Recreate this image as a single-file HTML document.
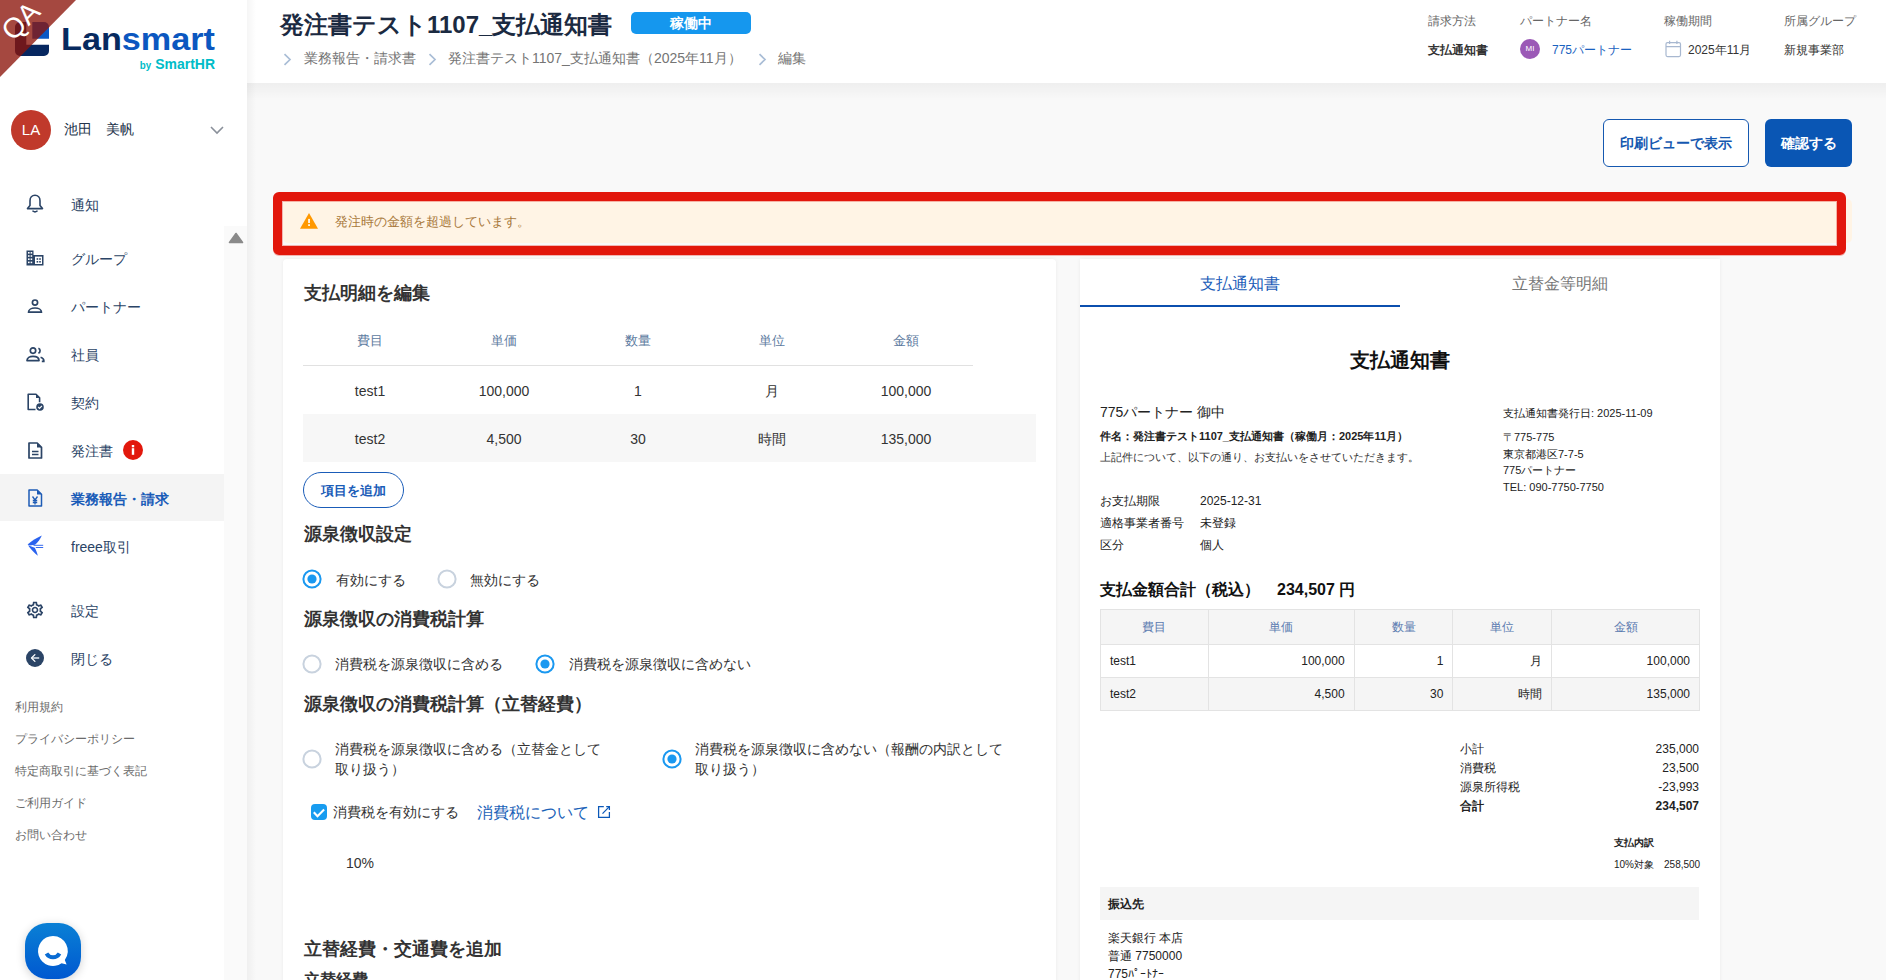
<!DOCTYPE html>
<html lang="ja"><head><meta charset="utf-8"><title>Lansmart</title>
<style>
*{box-sizing:border-box}
html,body{margin:0;padding:0;width:1886px;height:980px;overflow:hidden;background:#f9f9f9;font-family:"Liberation Sans",sans-serif;color:#333}
.a{position:absolute;white-space:nowrap;line-height:1}
svg{position:absolute;overflow:visible}
#side{position:absolute;left:0;top:0;width:247px;height:980px;background:#fff}
.nav{position:absolute;left:71px;font-size:14px;color:#2b4466;line-height:1;white-space:nowrap}
.foot{position:absolute;left:15px;font-size:12px;color:#6b6b6b;line-height:1;white-space:nowrap}
#hdr{position:absolute;left:247px;top:0;width:1700px;height:83px;background:#fff}
.hl{font-size:12px;color:#666}
.hv{font-size:12px;color:#333}
.card{position:absolute;background:#fff;border-radius:6px;box-shadow:0 0 4px rgba(0,0,0,.06)}
.sec{font-size:18px;font-weight:bold;color:#333}
.th{font-size:13px;color:#5c7aa0;text-align:center;width:134px}
.td{font-size:14px;color:#333;text-align:center;width:134px}
.radio{position:absolute;width:19px;height:19px;border-radius:50%;border:2px solid #c9d3df;background:#fff}
.radio.on{border-color:#1a96f0}
.radio.on:after{content:"";position:absolute;left:3.5px;top:3.5px;width:8px;height:8px;border-radius:50%;background:#1a96f0}
.rt{font-size:14px;color:#333}
.p11{font-size:11px;color:#222}
.p12{font-size:12px;color:#222}
table.pv{position:absolute;left:1100px;top:609px;width:600px;border-collapse:collapse;font-size:12px;color:#222}
table.pv td,table.pv th{border:1px solid #e3e3e3;padding:0 9px;line-height:1}
table.pv th{background:#f5f5f5;color:#5b7bb0;font-weight:normal;height:35px;text-align:center}
table.pv td{height:33px;text-align:right}
table.pv td:first-child{text-align:left}
table.pv tr.g td{background:#f5f5f5}
</style></head><body>

<!-- SIDEBAR -->
<div id="side">
  <!-- logo -->
  <svg style="left:15px;top:22px" width="34" height="34" viewBox="0 0 34 34">
    <path d="M0 5a5 5 0 0 1 5-5H11.3V22.8H34V29a5 5 0 0 1-5 5H5a5 5 0 0 1-5-5Z" fill="#062760"/>
    <path d="M17.3 0H29a5 5 0 0 1 5 5V16.8H17.3Z" fill="#0b58c4"/>
  </svg>
  <svg style="left:61px;top:20px" width="160" height="56" viewBox="0 0 160 56">
    <text x="0" y="30" font-family="Liberation Sans" font-weight="bold" font-size="30.5" textLength="154" lengthAdjust="spacingAndGlyphs"><tspan fill="#072a5f">Lan</tspan><tspan fill="#0b57c0">smart</tspan></text>
    <text x="78.8" y="49" font-family="Liberation Sans" font-weight="bold" font-size="11.5" fill="#00bcc8" textLength="11.4" lengthAdjust="spacingAndGlyphs">by</text><text x="94.2" y="49" font-family="Liberation Sans" font-weight="bold" font-size="14.5" fill="#00bcc8" textLength="59.8" lengthAdjust="spacingAndGlyphs">SmartHR</text>
  </svg>
  <!-- user -->
  <div class="a" style="left:11px;top:110px;width:40px;height:40px;border-radius:50%;background:#c0392b;color:#fff;font-size:15px;line-height:40px;text-align:center">LA</div>
  <div class="a" style="left:64px;top:122px;font-size:14px;color:#23344b">池田　美帆</div>
  <svg style="left:210px;top:126px" width="14" height="8" viewBox="0 0 14 8"><path d="M1 1l6 6 6-6" fill="none" stroke="#8a909a" stroke-width="1.6"/></svg>

  <!-- highlight row -->
  <div class="a" style="left:0;top:474px;width:224px;height:47px;background:#f4f4f4"></div>
  <!-- scrollbar -->
  <div class="a" style="left:224px;top:226px;width:23px;height:754px;background:#fafafa"></div>
  <svg style="left:228px;top:232px" width="16" height="12" viewBox="0 0 16 12"><path d="M8 1.5L14.5 10.5H1.5Z" fill="#8a8a8a" stroke="#8a8a8a" stroke-width="1.6" stroke-linejoin="round"/></svg>

  <!-- nav icons -->
  <svg style="left:26px;top:194px" width="18" height="20" viewBox="0 0 18 20"><path d="M9 1.3c-3 0-5 2.4-5 5.4v4.8L1.5 14.6h15L14 11.5V6.7c0-3-2-5.4-5-5.4z" fill="none" stroke="#2b4466" stroke-width="1.6" stroke-linejoin="round"/><path d="M7 17.2q2 1.3 4 0" fill="none" stroke="#2b4466" stroke-width="1.6" stroke-linecap="round"/></svg>
  <svg style="left:26px;top:250px" width="18" height="16" viewBox="0 0 18 16"><path d="M0.5 0.5h7v15h-7zM7.5 5h10v10.5h-10z" fill="#2b4466"/><g fill="#fff"><rect x="2" y="2" width="1.6" height="1.6"/><rect x="4.6" y="2" width="1.6" height="1.6"/><rect x="2" y="5.2" width="1.6" height="1.6"/><rect x="4.6" y="5.2" width="1.6" height="1.6"/><rect x="2" y="8.4" width="1.6" height="1.6"/><rect x="4.6" y="8.4" width="1.6" height="1.6"/><rect x="2" y="11.6" width="1.6" height="1.6"/><rect x="4.6" y="11.6" width="1.6" height="1.6"/><rect x="9" y="6.6" width="7" height="7.4"/></g><g fill="#2b4466"><rect x="10.6" y="8.2" width="1.6" height="1.6"/><rect x="13.2" y="8.2" width="1.6" height="1.6"/><rect x="10.6" y="11" width="1.6" height="1.6"/><rect x="13.2" y="11" width="1.6" height="1.6"/></g></svg>
  <svg style="left:27px;top:297px" width="16" height="17" viewBox="0 0 16 17"><circle cx="8" cy="5.6" r="2.6" fill="none" stroke="#2b4466" stroke-width="1.7"/><path d="M1.5 15.2c0-2.6 3-4.2 6.5-4.2s6.5 1.6 6.5 4.2z" fill="none" stroke="#2b4466" stroke-width="1.7" stroke-linejoin="round"/></svg>
  <svg style="left:26px;top:346px" width="20" height="17" viewBox="0 0 20 17"><circle cx="7" cy="4.6" r="2.7" fill="none" stroke="#2b4466" stroke-width="1.7"/><path d="M12.4 2.2a2.7 2.7 0 0 1 0 5" fill="none" stroke="#2b4466" stroke-width="1.7"/><path d="M1 14.6c0-2.7 2.7-4.2 6-4.2s6 1.5 6 4.2z" fill="none" stroke="#2b4466" stroke-width="1.7" stroke-linejoin="round"/><path d="M14.6 11.2c1.8.6 3.2 1.7 3.2 3.4v0.8h-2" fill="none" stroke="#2b4466" stroke-width="1.7"/></svg>
  <svg style="left:27px;top:393px" width="18" height="19" viewBox="0 0 18 19"><path d="M8.5 16.5H1.2V1.2h7.8l3.6 3.6v4.5" fill="none" stroke="#2b4466" stroke-width="1.6" stroke-linejoin="round"/><path d="M9 1.2v3.8h3.6z" fill="#2b4466"/><circle cx="13" cy="14" r="3.8" fill="#2b4466"/><path d="M11.2 14l1.3 1.3 2.4-2.4" fill="none" stroke="#fff" stroke-width="1.2"/></svg>
  <svg style="left:28px;top:442px" width="15" height="17" viewBox="0 0 15 17"><path d="M1 1h8.2l4.3 4.3V16H1z" fill="none" stroke="#2b4466" stroke-width="1.7" stroke-linejoin="round"/><path d="M9 1v4.5h4.5z" fill="#2b4466"/><path d="M4 9.5h6.5M4 12.5h6.5" stroke="#2b4466" stroke-width="1.6"/></svg>
  <svg style="left:28px;top:489px" width="15" height="18" viewBox="0 0 15 18"><path d="M1 1h8.2l4.3 4.3V17H1z" fill="none" stroke="#1d5bb5" stroke-width="1.5" stroke-linejoin="round"/><path d="M9 1v4.5h4.5z" fill="#1d5bb5"/><path d="M4.5 7.5l2.5 3.5 2.5-3.5M7 11v4.5M4.8 11.5h4.4M4.8 13.5h4.4" fill="none" stroke="#1d5bb5" stroke-width="1.3"/></svg>
  <svg style="left:27px;top:535px" width="17" height="22" viewBox="0 0 17 22"><path d="M0.6 9.4C4.5 6.2 9.5 3 14.8 0.6C13.4 4 11 7.2 8 9.8L2.6 10.5Z" fill="#2a62ee"/><path d="M6.5 10.3H16.2M8.8 12.5H16.2" stroke="#2a62ee" stroke-width="0.95"/><path d="M1 10.2L7.8 12.8C9.2 15.2 10.2 18.2 10.8 20.8C7.2 17.8 4 14.2 1 10.2Z" fill="#2a62ee"/></svg>
  <svg style="left:25px;top:600px" width="20" height="20" viewBox="0 0 24 24"><path d="M19.43 12.98c.04-.32.07-.64.07-.98 0-.34-.03-.66-.07-.98l2.11-1.65c.19-.15.24-.42.12-.64l-2-3.46a.5.5 0 0 0-.61-.22l-2.49 1c-.52-.4-1.08-.73-1.69-.98l-.38-2.65A.49.49 0 0 0 14 2h-4c-.25 0-.46.18-.49.42l-.38 2.65c-.61.25-1.17.59-1.69.98l-2.49-1a.57.57 0 0 0-.18-.03c-.17 0-.34.09-.43.25l-2 3.46c-.13.22-.07.49.12.64l2.11 1.65c-.04.32-.07.65-.07.98s.03.66.07.98l-2.11 1.65c-.19.15-.24.42-.12.64l2 3.46a.5.5 0 0 0 .61.22l2.49-1c.52.4 1.08.73 1.69.98l.38 2.65c.03.24.24.42.49.42h4c.25 0 .46-.18.49-.42l.38-2.65c.61-.25 1.17-.59 1.69-.98l2.49 1c.06.02.12.03.18.03.17 0 .34-.09.43-.25l2-3.46c.12-.22.07-.49-.12-.64l-2.11-1.65zm-1.98-1.71c.04.31.05.52.05.73 0 .21-.02.43-.05.73l-.14 1.13.89.7 1.08.84-.7 1.21-1.27-.51-1.04-.42-.9.68c-.43.32-.84.56-1.25.73l-1.06.43-.16 1.13-.2 1.35h-1.4l-.19-1.35-.16-1.13-1.06-.43c-.43-.18-.83-.41-1.23-.71l-.91-.7-1.06.43-1.27.51-.7-1.21 1.08-.84.89-.7-.14-1.13c-.03-.31-.05-.54-.05-.74s.02-.43.05-.73l.14-1.13-.89-.7-1.08-.84.7-1.21 1.27.51 1.04.42.9-.68c.43-.32.84-.56 1.25-.73l1.06-.43.16-1.13.2-1.35h1.39l.19 1.35.16 1.13 1.06.43c.43.18.83.41 1.23.71l.91.7 1.06-.43 1.27-.51.7 1.21-1.07.85-.89.7.14 1.13zM12 8c-2.21 0-4 1.79-4 4s1.79 4 4 4 4-1.79 4-4-1.79-4-4-4zm0 6c-1.1 0-2-.9-2-2s.9-2 2-2 2 .9 2 2-.9 2-2 2z" fill="#2b4466"/></svg>
  <svg style="left:26px;top:649px" width="18" height="18" viewBox="0 0 18 18"><circle cx="9" cy="9" r="9" fill="#2b4466"/><path d="M13.2 9H6.4" fill="none" stroke="#c9d2de" stroke-width="1.7"/><path d="M8.9 5.6L5.5 9l3.4 3.4" fill="none" stroke="#fff" stroke-width="1.3" stroke-linecap="round" stroke-linejoin="round"/></svg>

  <div class="nav" style="top:198px">通知</div>
  <div class="nav" style="top:252px">グループ</div>
  <div class="nav" style="top:300px">パートナー</div>
  <div class="nav" style="top:348px">社員</div>
  <div class="nav" style="top:396px">契約</div>
  <div class="nav" style="top:444px">発注書</div>
  <div class="a" style="left:123px;top:440px;width:20px;height:20px;border-radius:50%;background:#e2180c"></div>
  <svg style="left:123px;top:440px" width="20" height="20" viewBox="0 0 20 20"><rect x="8.8" y="8.2" width="2.4" height="6.6" fill="#fff"/><rect x="8.8" y="5" width="2.4" height="2.3" fill="#fff"/></svg>
  <div class="nav" style="top:492px;color:#1a5cb8;font-weight:bold">業務報告・請求</div>
  <div class="nav" style="top:540px">freee取引</div>
  <div class="nav" style="top:604px">設定</div>
  <div class="nav" style="top:652px">閉じる</div>

  <div class="foot" style="top:701px">利用規約</div>
  <div class="foot" style="top:733px">プライバシーポリシー</div>
  <div class="foot" style="top:765px">特定商取引に基づく表記</div>
  <div class="foot" style="top:797px">ご利用ガイド</div>
  <div class="foot" style="top:829px">お問い合わせ</div>

  <!-- chat button -->
  <div class="a" style="left:25px;top:923px;width:56px;height:56px;border-radius:22px;background:linear-gradient(#0a80d5,#0058d0);box-shadow:0 2px 10px rgba(0,0,0,.18)"></div>
  <svg style="left:25px;top:923px" width="56" height="56" viewBox="0 0 56 56"><path d="M28 13a15 15 0 1 0 8.6 27.3l5 1.2-1.8-4.6A15 15 0 0 0 28 13z" fill="#fff"/><path d="M21.5 30.5a7.5 7.5 0 0 0 13 0" fill="none" stroke="#0a6cd3" stroke-width="4"/></svg>
</div>


<!-- HEADER -->
<div id="hdr"></div>
<div class="a" style="left:247px;top:83px;width:1639px;height:18px;background:linear-gradient(rgba(0,0,0,.045),rgba(0,0,0,0))"></div>
<div class="a" style="left:247px;top:0;width:9px;height:980px;background:linear-gradient(to right,rgba(0,0,0,.04),rgba(0,0,0,0))"></div>
<div class="a" style="left:280px;top:13px;font-size:24px;font-weight:bold;color:#1b2a41">発注書テスト1107_支払通知書</div>
<div class="a" style="left:631px;top:12px;width:120px;height:22px;border-radius:5px;background:#1597ee;color:#fff;font-size:14px;font-weight:bold;text-align:center;line-height:22px">稼働中</div>
<svg style="left:283px;top:53px" width="9" height="13" viewBox="0 0 9 13"><path d="M1.5 1.2l5.5 5.3-5.5 5.3" fill="none" stroke="#a9bdd6" stroke-width="1.7"/></svg>
<div class="a" style="left:304px;top:51px;font-size:14px;color:#757575">業務報告・請求書</div>
<svg style="left:428px;top:53px" width="9" height="13" viewBox="0 0 9 13"><path d="M1.5 1.2l5.5 5.3-5.5 5.3" fill="none" stroke="#a9bdd6" stroke-width="1.7"/></svg>
<div class="a" style="left:448px;top:51px;font-size:14px;color:#757575">発注書テスト1107_支払通知書（2025年11月）</div>
<svg style="left:758px;top:53px" width="9" height="13" viewBox="0 0 9 13"><path d="M1.5 1.2l5.5 5.3-5.5 5.3" fill="none" stroke="#a9bdd6" stroke-width="1.7"/></svg>
<div class="a" style="left:778px;top:51px;font-size:14px;color:#757575">編集</div>

<div class="a hl" style="left:1428px;top:15px">請求方法</div>
<div class="a hv" style="left:1428px;top:44px;font-weight:bold">支払通知書</div>
<div class="a hl" style="left:1520px;top:15px">パートナー名</div>
<div class="a" style="left:1520px;top:39px;width:20px;height:20px;border-radius:50%;background:#9b59b6;color:#fff;font-size:8px;line-height:20px;text-align:center">MI</div>
<div class="a hv" style="left:1552px;top:44px;color:#1a62c0">775パートナー</div>
<div class="a hl" style="left:1664px;top:15px">稼働期間</div>
<svg style="left:1665px;top:40px" width="17" height="18" viewBox="0 0 17 18"><rect x="1" y="2.6" width="14.5" height="14" rx="1.5" fill="none" stroke="#a8b8d0" stroke-width="1.2"/><path d="M1 6.6h14.5M4.6 0.8v3.2M11.9 0.8v3.2" stroke="#a8b8d0" stroke-width="1.2"/></svg>
<div class="a hv" style="left:1688px;top:44px">2025年11月</div>
<div class="a hl" style="left:1784px;top:15px">所属グループ</div>
<div class="a hv" style="left:1784px;top:44px">新規事業部</div>

<!-- BUTTONS -->
<div class="a" style="left:1603px;top:119px;width:146px;height:48px;border:1px solid #1558b0;border-radius:6px;background:#fff;color:#1558b0;font-size:14px;font-weight:bold;text-align:center;line-height:46px">印刷ビューで表示</div>
<div class="a" style="left:1765px;top:119px;width:87px;height:48px;border-radius:6px;background:#0a56b4;color:#fff;font-size:14px;font-weight:bold;text-align:center;line-height:48px">確認する</div>

<!-- ALERT -->
<div class="a" style="left:283px;top:199px;width:1569px;height:44px;border-radius:5px;background:#fff4e5"></div>
<svg style="left:299px;top:212px" width="20" height="18" viewBox="0 0 20 18"><path d="M10 1L19 16.8H1z" fill="#ff9800"/><rect x="9.1" y="6.9" width="1.9" height="4.1" fill="#fff4e5"/><rect x="9.1" y="12.2" width="1.9" height="1.8" fill="#fff4e5"/></svg>
<div class="a" style="left:335px;top:215px;font-size:13px;color:#a8783a">発注時の金額を超過しています。</div>
<div class="a" style="left:273px;top:192px;width:1573px;height:63px;border:9px solid #e2170c;border-radius:6px;box-shadow:0 1px 0 0 rgba(226,23,12,.3),inset 0 0 0 1px rgba(226,23,12,.3)"></div>


<!-- LEFT CARD -->
<div class="card" style="left:283px;top:259px;width:773px;height:760px;border-radius:4px"></div>
<div class="a sec" style="left:304px;top:284px">支払明細を編集</div>
<div class="a th" style="left:303px;top:334px">費目</div>
<div class="a th" style="left:437px;top:334px">単価</div>
<div class="a th" style="left:571px;top:334px">数量</div>
<div class="a th" style="left:705px;top:334px">単位</div>
<div class="a th" style="left:839px;top:334px">金額</div>
<div class="a" style="left:303px;top:365px;width:670px;height:1px;background:#e1e1e1"></div>
<div class="a td" style="left:303px;top:384px">test1</div>
<div class="a td" style="left:437px;top:384px">100,000</div>
<div class="a td" style="left:571px;top:384px">1</div>
<div class="a td" style="left:705px;top:384px">月</div>
<div class="a td" style="left:839px;top:384px">100,000</div>
<div class="a" style="left:303px;top:414px;width:733px;height:48px;background:#f7f7f7"></div>
<div class="a td" style="left:303px;top:432px">test2</div>
<div class="a td" style="left:437px;top:432px">4,500</div>
<div class="a td" style="left:571px;top:432px">30</div>
<div class="a td" style="left:705px;top:432px">時間</div>
<div class="a td" style="left:839px;top:432px">135,000</div>
<div class="a" style="left:303px;top:472px;width:101px;height:36px;border:1px solid #1a5cb8;border-radius:18px;color:#1a5cb8;font-size:13px;font-weight:bold;text-align:center;line-height:36px">項目を追加</div>

<div class="a sec" style="left:304px;top:525px">源泉徴収設定</div>
<svg style="left:302.0px;top:569.0px" width="20" height="20" viewBox="0 0 20 20"><circle cx="10" cy="10" r="8.6" fill="#fff" stroke="#1a98f0" stroke-width="2"/><circle cx="10" cy="10" r="4.6" fill="#1a98f0"/></svg>
<div class="a rt" style="left:336px;top:573px">有効にする</div>
<svg style="left:437.2px;top:569.0px" width="20" height="20" viewBox="0 0 20 20"><circle cx="10" cy="10" r="8.6" fill="#fff" stroke="#c8d2de" stroke-width="2"/></svg>
<div class="a rt" style="left:470px;top:573px">無効にする</div>

<div class="a sec" style="left:304px;top:610px">源泉徴収の消費税計算</div>
<svg style="left:302.0px;top:653.6px" width="20" height="20" viewBox="0 0 20 20"><circle cx="10" cy="10" r="8.6" fill="#fff" stroke="#c8d2de" stroke-width="2"/></svg>
<div class="a rt" style="left:335px;top:657px">消費税を源泉徴収に含める</div>
<svg style="left:534.5px;top:653.6px" width="20" height="20" viewBox="0 0 20 20"><circle cx="10" cy="10" r="8.6" fill="#fff" stroke="#1a98f0" stroke-width="2"/><circle cx="10" cy="10" r="4.6" fill="#1a98f0"/></svg>
<div class="a rt" style="left:569px;top:657px">消費税を源泉徴収に含めない</div>

<div class="a sec" style="left:304px;top:695px">源泉徴収の消費税計算（立替経費）</div>
<svg style="left:302.1px;top:749.0px" width="20" height="20" viewBox="0 0 20 20"><circle cx="10" cy="10" r="8.6" fill="#fff" stroke="#c8d2de" stroke-width="2"/></svg>
<div class="a rt" style="left:335px;top:739px;line-height:20px">消費税を源泉徴収に含める（立替金として<br>取り扱う）</div>
<svg style="left:661.9px;top:749.0px" width="20" height="20" viewBox="0 0 20 20"><circle cx="10" cy="10" r="8.6" fill="#fff" stroke="#1a98f0" stroke-width="2"/><circle cx="10" cy="10" r="4.6" fill="#1a98f0"/></svg>
<div class="a rt" style="left:695px;top:739px;line-height:20px">消費税を源泉徴収に含めない（報酬の内訳として<br>取り扱う）</div>

<div class="a" style="left:311px;top:804px;width:16px;height:16px;border-radius:4px;background:#189cf0"></div>
<svg style="left:311px;top:804px" width="16" height="16" viewBox="0 0 16 16"><path d="M2.8 8.3l3.7 3.9 6.6-6.6" fill="none" stroke="#fff" stroke-width="2.1"/></svg>
<div class="a rt" style="left:333px;top:805px">消費税を有効にする</div>
<div class="a" style="left:477px;top:805px;font-size:16px;color:#1a62b8">消費税について</div>
<svg style="left:597px;top:805px" width="15" height="15" viewBox="0 0 15 15"><path d="M6.8 1.5H1.6v10.9h10.8V7" fill="none" stroke="#0b58b8" stroke-width="1.25"/><path d="M9.2 1.5h3.2v3.4" fill="none" stroke="#0b58b8" stroke-width="1.25"/><path d="M5.5 8.6L12.1 1.9" fill="none" stroke="#0b58b8" stroke-width="1.25"/></svg>
<div class="a rt" style="left:346px;top:856px">10%</div>

<div class="a sec" style="left:304px;top:940px">立替経費・交通費を追加</div>
<div class="a" style="left:304px;top:972px;font-size:16px;font-weight:bold;color:#333">立替経費</div>

<!-- RIGHT CARD -->
<div class="card" style="left:1080px;top:259px;width:640px;height:760px;border-radius:0"></div>
<div class="a" style="left:1200px;top:276px;font-size:16px;color:#1a5cb8">支払通知書</div>
<div class="a" style="left:1512px;top:276px;font-size:16px;color:#777">立替金等明細</div>
<div class="a" style="left:1080px;top:305px;width:320px;height:2px;background:#0b4fae"></div>

<div class="a" style="left:1350px;top:350px;font-size:20px;font-weight:bold;color:#111">支払通知書</div>
<div class="a" style="left:1100px;top:405px;font-size:14px;color:#222">775パートナー 御中</div>
<div class="a p11" style="left:1100px;top:431px;font-weight:bold">件名：発注書テスト1107_支払通知書（稼働月：2025年11月）</div>
<div class="a p11" style="left:1100px;top:452px;color:#333">上記件について、以下の通り、お支払いをさせていただきます。</div>

<div class="a p11" style="left:1503px;top:408px">支払通知書発行日: 2025-11-09</div>
<div class="a p11" style="left:1503px;top:429px;line-height:16.5px">〒775-775<br>東京都港区7-7-5<br>775パートナー<br>TEL: 090-7750-7750</div>

<div class="a p12" style="left:1100px;top:490px;line-height:22px">お支払期限<br>適格事業者番号<br>区分</div>
<div class="a p12" style="left:1200px;top:490px;line-height:22px">2025-12-31<br>未登録<br>個人</div>

<div class="a" style="left:1100px;top:582px;font-size:16px;font-weight:bold;color:#111">支払金額合計（税込）</div>
<div class="a" style="left:1277px;top:582px;font-size:16px;font-weight:bold;color:#111">234,507 円</div>

<table class="pv">
<tr><th style="width:108px">費目</th><th style="width:146px">単価</th><th style="width:99px">数量</th><th style="width:99px">単位</th><th style="width:148px">金額</th></tr>
<tr><td>test1</td><td>100,000</td><td>1</td><td>月</td><td>100,000</td></tr>
<tr class="g"><td>test2</td><td>4,500</td><td>30</td><td>時間</td><td>135,000</td></tr>
</table>

<div class="a p12" style="left:1460px;top:740px;line-height:19px">小計<br>消費税<br>源泉所得税<br><b>合計</b></div>
<div class="a p12" style="left:1560px;top:740px;width:139px;text-align:right;line-height:19px">235,000<br>23,500<br>-23,993<br><b>234,507</b></div>
<div class="a" style="left:1614px;top:838px;font-size:10px;font-weight:bold;color:#222">支払内訳</div>
<div class="a" style="left:1614px;top:860px;font-size:10px;color:#222">10%対象　258,500</div>

<div class="a" style="left:1100px;top:887px;width:599px;height:33px;background:#f5f5f5"></div>
<div class="a p12" style="left:1108px;top:898px;font-weight:bold">振込先</div>
<div class="a p12" style="left:1108px;top:929px;line-height:18px">楽天銀行 本店<br>普通 7750000<br>775ﾊﾟｰﾄﾅｰ</div>

<!-- QA corner -->
<svg style="left:0;top:0" width="80" height="80" viewBox="0 0 80 80"><path d="M0 0H76L0 77Z" fill="rgba(140,20,10,.78)"/><text x="0" y="0" transform="translate(13,42) rotate(-45)" font-family="Liberation Sans" font-size="28" fill="#fff">QA</text></svg>
</body></html>
